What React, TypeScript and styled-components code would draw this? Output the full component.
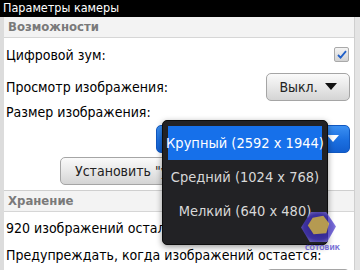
import styled, { createGlobalStyle } from 'styled-components'

const GlobalStyle = createGlobalStyle`
  html, body {
    margin: 0;
    padding: 0;
    background: #d9d9d9;
  }
  body {
    width: 360px;
    height: 270px;
    overflow: hidden;
    font-family: "DejaVu Sans Condensed", "DejaVu Sans", "Liberation Sans", sans-serif;
    font-stretch: condensed;
  }
`

const sizes = [
  { name: 'Крупный (2592 x 1944)', selected: true },
  { name: 'Средний (1024 x 768)', selected: false },
  { name: 'Мелкий (640 x 480)', selected: false },
]

const App = () => {
  return (
    <Screen>
      <GlobalStyle />
      <TitleBar>Параметры камеры</TitleBar>
      <Body>
        <Panel>
          <SectionHeader>Возможности</SectionHeader>
          <Row $height={33}>
            <Label>Цифровой зум:</Label>
            <Checkbox>
              <svg width="10" height="9" viewBox="0 0 10 9">
                <path d="M1 5 L3.6 7.6 L9 1.2" fill="none" stroke="#1f5fc8" strokeWidth="1.8" />
              </svg>
            </Checkbox>
          </Row>
          <Row $height={31}>
            <Label>Просмотр изображения:</Label>
            <GrayButton $width={84}>
              Выкл.
              <Arrow $color="#111" />
            </GrayButton>
          </Row>
          <Row $height={20}>
            <Label>Размер изображения:</Label>
          </Row>
          <Row $height={33} $justify="flex-end">
            <BlueButton>
              Крупный (2592 x 1944)
              <Arrow $color="#fff" />
            </BlueButton>
          </Row>
          <Row $height={32} $justify="flex-start" $indent={56}>
            <GrayButton $width={170} $start>Установить "умолчания"</GrayButton>
          </Row>
          <Divider />
          <SectionHeader>Хранение</SectionHeader>
          <Row $height={32}>
            <Label>920 изображений осталось.</Label>
          </Row>
          <Row $height={22}>
            <Label>Предупреждать, когда изображений остается:</Label>
          </Row>
          <Row $height={20} $justify="flex-end" $top={3}>
            <GrayButton $width={84}>100</GrayButton>
          </Row>
        </Panel>
        <ScrollStrip />

        <Menu>
          {sizes.map(({ name, selected }) => (
            <MenuItem key={name} $selected={selected}>{name}</MenuItem>
          ))}
        </Menu>

        <Watermark>
          <svg width="37" height="33" viewBox="0 0 38 34">
            <defs>
              <radialGradient id="wmPurple" cx="50%" cy="50%" r="55%">
                <stop offset="0%" stopColor="#2c1f9a" />
                <stop offset="75%" stopColor="#4636c4" />
                <stop offset="100%" stopColor="#7d70e0" />
              </radialGradient>
            </defs>
            <polygon points="11,1 27,1 37,16 28,32 10,32 1,17" fill="url(#wmPurple)" opacity="0.85" />
            <polygon points="13,7 24,5 30,13 27,23 14,24 8,15" fill="#c6a856" />
          </svg>
          <WatermarkText>СОТОВИК</WatermarkText>
        </Watermark>
      </Body>
    </Screen>
  )
}

const Screen = styled.div`
  width: 360px;
  height: 270px;
  display: flex;
  flex-direction: column;
  overflow: hidden;
`

const TitleBar = styled.div`
  height: 17px;
  background: #000;
  color: #fff;
  font-size: 12.5px;
  line-height: 16px;
  padding-left: 3px;
  flex-shrink: 0;
`

const Body = styled.div`
  position: relative;
  flex: 1;
  display: flex;
  padding-left: 4px;
  background: #dcdcdc;
`

const Panel = styled.div`
  width: 351px;
  background: #fff;
  display: flex;
  flex-direction: column;
`

const ScrollStrip = styled.div`
  width: 5px;
  background: #e4e4e4;
  border-left: 1px solid #cfcfcf;
`

const SectionHeader = styled.div`
  height: 20px;
  line-height: 20px;
  padding-left: 4px;
  font-size: 13px;
  font-weight: bold;
  color: #7a7a7a;
  background: #f3f3f3;
  border-bottom: 1px solid #d6d6d6;
  flex-shrink: 0;
`

const Row = styled.div<{ $height: number; $justify?: string; $indent?: number; $top?: number }>`
  height: ${p => p.$height}px;
  box-sizing: border-box;
  display: flex;
  align-items: ${p => (p.$top ? 'flex-start' : 'center')};
  justify-content: ${p => p.$justify || 'space-between'};
  padding: ${p => p.$top ?? 0}px 4px 0 ${p => p.$indent ?? 2}px;
  flex-shrink: 0;
`

const Label = styled.div`
  font-size: 14px;
  color: #000;
  white-space: nowrap;
`

const Checkbox = styled.div`
  width: 13px;
  height: 13px;
  margin-right: 1px;
  border: 1px solid #a9a9a9;
  border-radius: 2px;
  background: linear-gradient(#f4f4f4, #d2d2d2);
  display: flex;
  align-items: center;
  justify-content: center;
`

const GrayButton = styled.div<{ $width: number; $start?: boolean }>`
  width: ${p => p.$width}px;
  height: 28px;
  flex-shrink: 0;
  box-sizing: border-box;
  border: 1px solid #a5a5a5;
  border-radius: 5px;
  background: linear-gradient(#fafafa, #e6e6e6 55%, #d4d4d4);
  display: flex;
  align-items: center;
  justify-content: ${p => (p.$start ? 'flex-start' : 'center')};
  padding-left: ${p => (p.$start ? 14 : 0)}px;
  gap: 7px;
  font-size: 14px;
  color: #222;
  white-space: nowrap;
  overflow: hidden;
`

const BlueButton = styled.div`
  width: 194px;
  height: 28px;
  box-sizing: border-box;
  border: 1px solid #1158c0;
  border-radius: 5px;
  background: linear-gradient(#3c90f2, #1b6fe0 55%, #125fd0);
  display: flex;
  align-items: center;
  justify-content: flex-end;
  gap: 8px;
  padding-right: 10px;
  font-size: 14px;
  color: #fff;
  white-space: nowrap;
`

const Arrow = styled.span<{ $color: string }>`
  width: 0;
  height: 0;
  border-left: 6px solid transparent;
  border-right: 6px solid transparent;
  border-top: 7px solid ${p => p.$color};
`

const Divider = styled.div`
  height: 3px;
  border-bottom: 1px solid #cfcfcf;
  background: #fff;
  flex-shrink: 0;
`

const Menu = styled.div`
  position: absolute;
  left: 162px;
  top: 103px;
  width: 166px;
  height: 125px;
  box-sizing: border-box;
  padding: 5px 5px;
  background: #222225;
  border: 1px solid #0d0d0d;
  border-radius: 5px;
  box-shadow: 0 2px 6px rgba(0, 0, 0, 0.4);
  display: flex;
  flex-direction: column;
`

const MenuItem = styled.div<{ $selected: boolean }>`
  height: 34px;
  display: flex;
  align-items: center;
  justify-content: center;
  font-size: 14.5px;
  color: ${p => (p.$selected ? '#fff' : '#d8d8d8')};
  background: ${p => (p.$selected ? '#1670ea' : 'transparent')};
  white-space: nowrap;
`

const Watermark = styled.div`
  position: absolute;
  left: 297px;
  top: 194px;
  display: flex;
  flex-direction: column;
  align-items: center;
  opacity: 0.9;
`

const WatermarkText = styled.div`
  font-size: 7px;
  font-weight: bold;
  color: #6a5fd0;
  margin-left: 8px;
`

export default App
